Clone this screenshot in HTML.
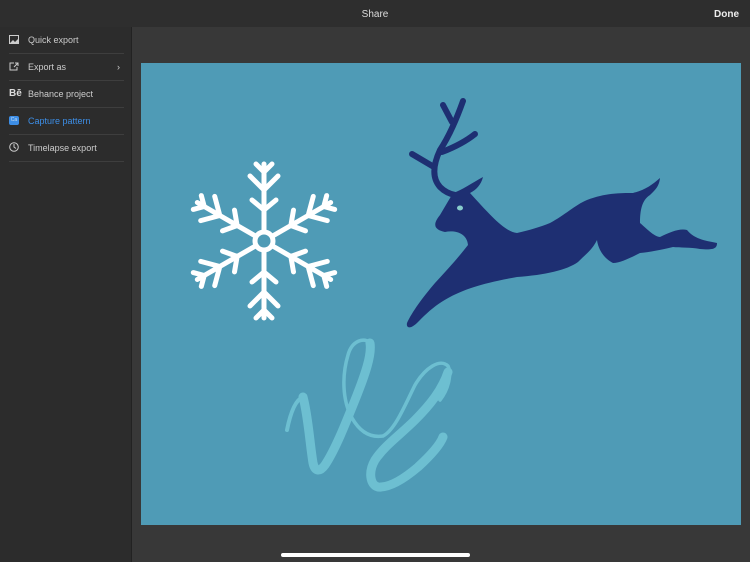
<!DOCTYPE html><html><head><style>
body{margin:0;width:750px;height:562px;background:#383838;font-family:"Liberation Sans",sans-serif;overflow:hidden;position:relative}
.top{position:absolute;left:0;top:0;width:750px;height:27px;background:#2e2e2e;color:#ddd;font-size:10px}
.side{position:absolute;left:0;top:27px;width:131px;height:535px;background:#2c2c2c;border-right:1px solid #222}
.it{position:absolute;left:9px;width:115px;height:26px;border-bottom:1px solid #3e3e3e;color:#ccc;font-size:9px;line-height:26px}
.it span{position:absolute;left:19px}
.ic{position:absolute;left:0;top:8px;width:10px;height:9px}
</style></head><body>
<div class="top"><div style="position:absolute;left:0;width:750px;text-align:center;top:9px">Share</div><div style="position:absolute;right:11px;top:9px;font-weight:bold;color:#eee">Done</div></div>
<div class="side">
<div class="it" style="top:0"><svg class="ic" viewBox="0 0 10 9"><rect x="0.5" y="0.5" width="9" height="8" fill="none" stroke="#ccc"/><path d="M1 8L4 5 6 7 9 4V8Z" fill="#ccc"/></svg><span>Quick export</span></div>
<div class="it" style="top:27px"><svg class="ic" viewBox="0 0 10 9"><path d="M5 1H1V8H8V5M6 1H9V4M9 1L5 5" fill="none" stroke="#ccc"/></svg><span>Export as</span><b style="position:absolute;right:4px;font-weight:normal">›</b></div>
<div class="it" style="top:54px"><b style="position:absolute;left:0;font-size:10px;color:#ddd">Bē</b><span>Behance project</span></div>
<div class="it" style="top:81px;color:#3d8ee6"><div class="ic" style="background:#3d8ee6;border-radius:2px;font-size:5px;color:#cde;line-height:9px;text-align:center">Ca</div><span>Capture pattern</span></div>
<div class="it" style="top:108px"><svg class="ic" viewBox="0 0 10 10" style="height:10px;top:7px"><circle cx="5" cy="5" r="4.3" fill="none" stroke="#ccc"/><path d="M5 2V5L7 6.5" fill="none" stroke="#ccc"/></svg><span>Timelapse export</span></div>
</div>
<svg style="position:absolute;left:0;top:0" width="750" height="562">
<rect x="141" y="63" width="600" height="462" fill="#4f9bb6"/>
<g stroke="#fff" stroke-width="5" stroke-linecap="round" fill="none">
<circle cx="264" cy="241" r="9"/>
<g id="arm"><path d="M264 231V164M264 190L250 176M264 190L278 176M264 210L252 200M264 210L276 200M264 172L256 164M264 172L272 164"/></g>
<use href="#arm" transform="rotate(60 264 241)"/><use href="#arm" transform="rotate(120 264 241)"/><use href="#arm" transform="rotate(180 264 241)"/><use href="#arm" transform="rotate(240 264 241)"/><use href="#arm" transform="rotate(300 264 241)"/>
</g>
<g fill="none" stroke="#1e2f72" stroke-width="6" stroke-linecap="round">
<path d="M463 101C458 115 450 135 440 150 433 165 432 178 440 187 445 192 450 194 455 195"/>
<path d="M434 167L412 154"/>
<path d="M452 122L443 105"/>
<path d="M442 152C455 147 465 142 475 134"/>
</g>
<path d="M453 193C462 190 472 183 483 177 481 185 476 190 470 193 490 215 505 232 517 233 530 230 540 227 550 223 565 215 575 205 587 200 605 193 620 193 633 193 645 190 652 185 660 178 659 187 655 190 650 195 642 200 640 210 640 223 648 230 655 237 660 237 670 232 680 228 687 230 695 240 708 241 717 243 717 249 713 250 700 249 690 247 680 248 673 247 660 250 650 252 640 253 630 258 620 263 613 263 603 258 598 248 597 240 592 250 587 253 578 262 567 270 545 275 517 277 483 283 465 289 450 297 435 305 427 313 418 322 410 330 406 328 407 323 412 312 423 297 435 283 447 270 458 258 468 245 467 233 455 230 445 232 436 230 431 226 440 215 447 205 Z" fill="#1e2f72"/>
<ellipse cx="460" cy="208" rx="3" ry="2.5" fill="#8cc"/>
<g fill="none" stroke="#6dbfd1" stroke-linecap="round">
<path d="M287 430C290 415 295 400 303 397" stroke-width="4"/>
<path d="M303 397C308 415 310 445 313 463 315 472 320 472 325 465 335 450 345 425 355 400 365 375 372 355 370 343" stroke-width="9"/>
<path d="M370 343C365 337 352 340 348 355 342 375 342 400 352 418 360 432 370 438 383 436 395 430 405 405 415 385 425 368 440 358 448 366 452 375 448 390 440 400" stroke-width="3.5"/>
<path d="M448 372C442 390 430 405 415 420 400 435 385 445 375 460 368 472 370 485 378 487 390 488 405 478 418 467 430 456 440 445 443 437" stroke-width="9"/>
</g>
</svg>
<div style="position:absolute;left:281px;top:553px;width:189px;height:4px;border-radius:2px;background:#fff"></div>
</body></html>
